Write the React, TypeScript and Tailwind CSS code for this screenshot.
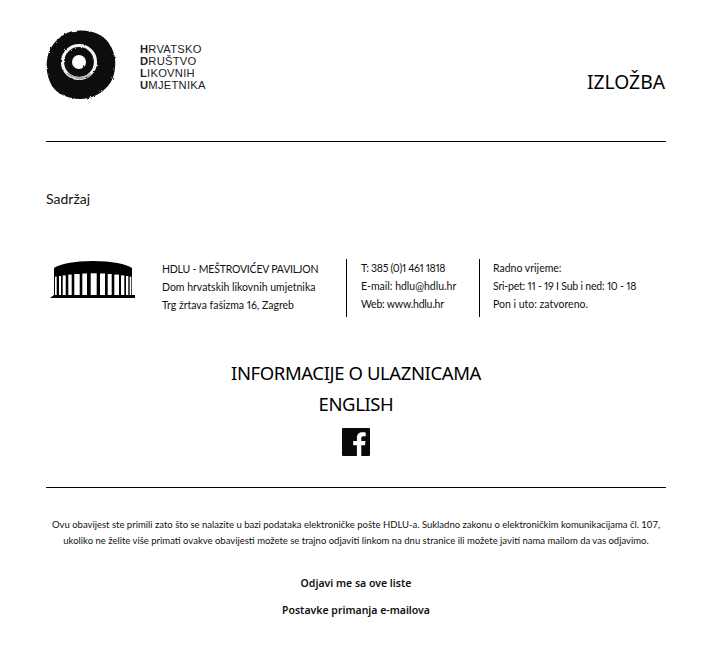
const Logo = () => (
  <svg width="70" height="70" viewBox="0 0 70 70" className="shrink-0">
    <defs>
      <filter id="rough" x="-10%" y="-10%" width="120%" height="120%">
        <feTurbulence type="fractalNoise" baseFrequency="0.3" numOctaves="2" seed="4" />
        <feDisplacementMap in="SourceGraphic" scale="3" />
      </filter>
      <filter id="roughInner" x="-10%" y="-10%" width="120%" height="120%">
        <feTurbulence type="fractalNoise" baseFrequency="0.3" numOctaves="2" seed="9" />
        <feDisplacementMap in="SourceGraphic" scale="2.5" />
      </filter>
    </defs>
    <path
      d="M25 1.5 C34 -0.5 45 0.5 52 4 C61 8 67 17 69 28 C70 39 68 49 62 56 C55 64 45 69 34 69 C23 69 11 64 6 56 C1 47 -0.5 37 1.5 27 C4 15 14 5 25 1.5 Z"
      fill="#0a0a0a"
      filter="url(#rough)"
    />
    <g filter="url(#roughInner)">
      <circle cx="33" cy="32" r="16.5" fill="none" stroke="#f4f4f4" strokeWidth="3.2" />
      <path d="M21 43 C27 49 39 50 45 44" fill="none" stroke="#aaa" strokeWidth="2.4" />
      <circle cx="33" cy="32" r="7" fill="#fff" />
    </g>
  </svg>
);

const slits = [
  [5, 1.7, 15.7],
  [9, 2, 15],
  [12.7, 3, 14.4],
  [18.3, 3.4, 13.6],
  [24.3, 5.4, 13],
  [32.3, 4.7, 12.5],
  [40.7, 6, 12.3],
  [50, 5, 12.5],
  [57.7, 4, 13],
  [64.3, 4.7, 13.6],
  [71, 3.3, 14.4],
  [76, 2.3, 15],
  [79.7, 1.6, 15.7],
];

const Pavilion = () => (
  <svg width="85" height="37" viewBox="0 0 85 37" className="shrink-0">
    <path d="M4 7 C10 3 24 0 43 0 C62 0 76 3 82 7 V34 H85 V37 H0 L4 34 Z" fill="#000" />
    <g fill="#fff">
      {slits.map(([x, w, top], i) => (
        <rect key={i} x={x} y={top} width={w} height={34 - top} />
      ))}
    </g>
  </svg>
);

const Facebook = () => (
  <svg width="28" height="28" viewBox="0 0 28 28">
    <rect width="28" height="28" rx="1" fill="#0a0a0a" />
    <path
      d="M19.3 28 V17.2 H23 L23.5 13 H19.3 V10.3 C19.3 9 19.7 8.2 21.5 8.2 H23.7 V4.4 C23.3 4.4 22 4.2 20.4 4.2 C17.1 4.2 14.9 6.2 14.9 9.9 V13 H11.2 V17.2 H14.9 V28 Z"
      fill="#fff"
    />
  </svg>
);

export default function App() {
  return (
    <div className="w-[718px] h-[663px] bg-white text-[#111] font-['Lato','Noto_Sans',sans-serif]">
      <div className="mx-[46px] w-[620px]">
        <header className="h-[142px] border-b border-black flex justify-between">
          <div className="flex pt-[30px]">
            <Logo />
            <div className="ml-[24px] mt-[13px] font-['Liberation_Sans',sans-serif] text-[11.2px] leading-[12px] tracking-[0.25px] text-[#222]">
              <div><b>H</b>RVATSKO</div>
              <div><b>D</b>RUŠTVO</div>
              <div><b>L</b>IKOVNIH</div>
              <div><b>U</b>MJETNIKA</div>
            </div>
          </div>
          <h1 className="pt-[70px] mr-px text-[19.3px] leading-[24px] font-['Noto_Sans',sans-serif] text-black">IZLOŽBA</h1>
        </header>

        <p className="mt-[47px] text-[14px] leading-[20px]">Sadržaj</p>

        <section className="mt-[50px] flex text-[10.5px] leading-[18px] proportional-nums">
          <div className="w-[116px] pl-[4px] pt-[2px]">
            <Pavilion />
          </div>
          <div className="w-[184px] pt-px">
            <div className="tracking-[-0.2px]">HDLU - MEŠTROVIĆEV PAVILJON</div>
            <div>Dom hrvatskih likovnih umjetnika</div>
            <div>Trg žrtava fašizma 16, Zagreb</div>
          </div>
          <div className="w-[133px] h-[58px] border-l border-black pl-[14px]">
            <div className="tracking-[-0.3px]">T: 385 (0)1 461 1818</div>
            <div>E-mail: hdlu@hdlu.hr</div>
            <div className="tracking-[-0.2px]">Web: www.hdlu.hr</div>
          </div>
          <div className="h-[58px] border-l border-black pl-[13px]">
            <div>Radno vrijeme:</div>
            <div className="tracking-[-0.2px]">Sri-pet: 11 - 19 I Sub i ned: 10 - 18</div>
            <div>Pon i uto: zatvoreno.</div>
          </div>
        </section>

        <div className="mt-[40px] flex flex-col items-center text-[18.5px] leading-[31px] tracking-[-0.4px] text-black font-['Noto_Sans',sans-serif]">
          <div>INFORMACIJE O ULAZNICAMA</div>
          <div>ENGLISH</div>
          <div className="mt-[9px]">
            <Facebook />
          </div>
        </div>

        <div className="mt-[31px] border-t border-black pt-[29px] text-center">
          <p className="text-[9.5px] leading-[16px] whitespace-nowrap">
            Ovu obavijest ste primili zato što se nalazite u bazi podataka elektroničke pošte HDLU-a. Sukladno zakonu o elektroničkim komunikacijama čl. 107,
            <br />
            ukoliko ne želite više primati ovakve obavijesti možete se trajno odjaviti linkom na dnu stranice ili možete javiti nama mailom da vas odjavimo.
          </p>
          <p className="mt-[24px] text-[10.5px] leading-[20px] font-semibold font-['Noto_Sans',sans-serif]">Odjavi me sa ove liste</p>
          <p className="mt-[7px] text-[10.5px] leading-[20px] font-semibold font-['Noto_Sans',sans-serif]">Postavke primanja e-mailova</p>
        </div>
      </div>
    </div>
  );
}
